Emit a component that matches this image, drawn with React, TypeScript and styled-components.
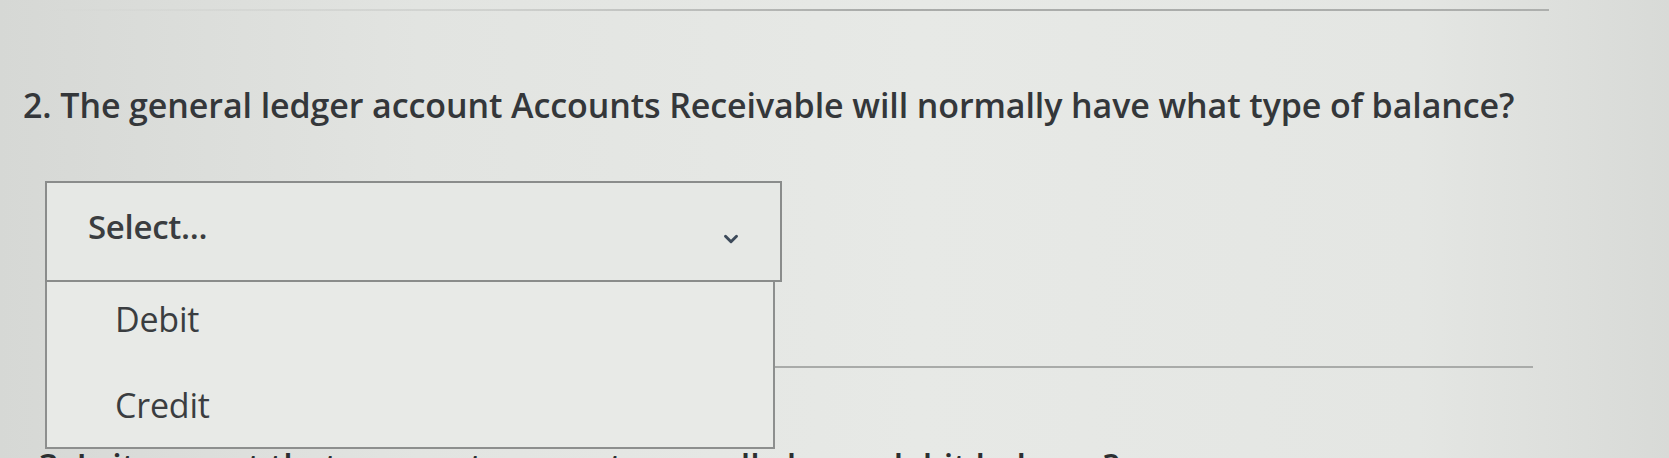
import React from "react";
import styled, { createGlobalStyle } from "styled-components";
import { ChevronDown } from "lucide-react";

const GlobalStyle = createGlobalStyle`
  html, body {
    margin: 0;
    padding: 0;
  }
  body {
    background: linear-gradient(90deg, #d6d8d5 0%, #e2e4e1 25%, #e7e9e6 55%, #e4e6e3 85%, #d8dad7 100%);
    font-family: "Open Sans", "Noto Sans", sans-serif;
    color: #36393b;
  }
`;

const Page = styled.div`
  width: 1669px;
  height: 458px;
  overflow: hidden;
  padding: 9px 0 0 45px;
  box-sizing: border-box;
  display: flex;
  flex-direction: column;

  & > * {
    flex-shrink: 0;
  }
`;

const TopRule = styled.div`
  width: 1504px;
  height: 2px;
  background: linear-gradient(90deg, rgba(170, 172, 170, 0) 0%, rgba(170, 172, 170, 0.35) 30%, #a9aba9 55%, #adafad 100%);
`;

const Question = styled.h2`
  margin: 72px 0 0 -22px;
  font-size: 34px;
  font-weight: 600;
  line-height: 45px;
  letter-spacing: -0.1px;
  color: #34373a;
  white-space: nowrap;
`;

const SelectWrap = styled.div`
  position: relative;
  width: 737px;
  margin-top: 53px;
`;

const SelectHeader = styled.div`
  height: 101px;
  box-sizing: border-box;
  border: 2px solid #8a8c8b;
  background: #e6e8e5;
  display: flex;
  align-items: center;
  justify-content: space-between;
  padding: 0 38px 0 41px;
`;

const Placeholder = styled.span`
  font-size: 33px;
  font-weight: 600;
  letter-spacing: -0.3px;
  color: #3a3d40;
  margin-top: -10px;
`;

const Chevron = styled(ChevronDown)`
  color: #3d4a5a;
  margin-top: 14px;
`;

const Menu = styled.ul`
  position: absolute;
  top: 101px;
  left: 0;
  width: 730px;
  height: 167px;
  margin: 0;
  padding: 0;
  list-style: none;
  box-sizing: border-box;
  border: 2px solid #8d8f8e;
  border-top: none;
  background: #e8eae7;
  z-index: 2;
`;

const Option = styled.li`
  height: 86px;
  box-sizing: border-box;
  display: flex;
  align-items: center;
  padding: 0 0 12px 68px;
  font-size: 34px;
  font-weight: 500;
  letter-spacing: -0.2px;
  color: #3a3d40;
`;

const Rule = styled.div`
  width: 1488px;
  height: 2px;
  margin-top: 84px;
  background: #a9aba9;
`;

const NextQuestion = styled.p`
  margin: 76px 0 0 -6px;
  font-size: 34px;
  font-weight: 600;
  line-height: 45px;
  color: #2c2f31;
  white-space: nowrap;
`;

export default function App() {
  return (
    <>
      <GlobalStyle />
      <Page>
        <TopRule />
        <Question>
          2. The general ledger account Accounts Receivable will normally have what type of balance?
        </Question>
        <SelectWrap>
          <SelectHeader>
            <Placeholder>Select...</Placeholder>
            <Chevron size={22} strokeWidth={3.2} />
          </SelectHeader>
          <Menu>
            <Option>Debit</Option>
            <Option>Credit</Option>
          </Menu>
        </SelectWrap>
        <Rule />
        <NextQuestion>
          3. Is it correct that an asset account normally has a debit balance?
        </NextQuestion>
      </Page>
    </>
  );
}
